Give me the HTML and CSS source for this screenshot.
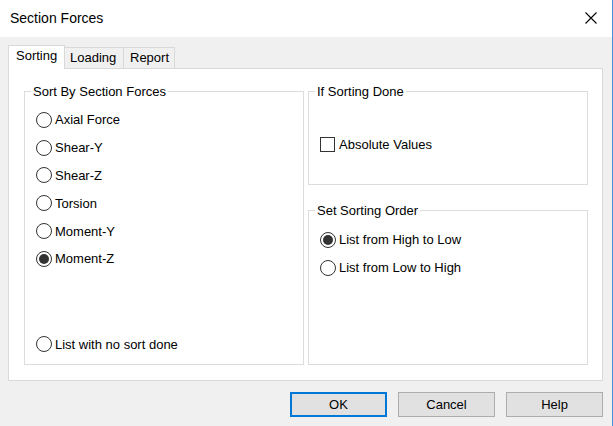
FILE: index.html
```html
<!DOCTYPE html>
<html lang="en">
<head>
    <meta charset="UTF-8">
    <title>Section Forces</title>
    <link rel="stylesheet" href="styles.css">
</head>
<body>
<div class="window">

  <!-- barra de título -->
  <div class="titlebar">
    <span class="title">Section Forces</span>
    <span class="close">
      <svg width="12" height="12" viewBox="0 0 12 12"><path d="M0.5 0.5 L11.5 11.5 M11.5 0.5 L0.5 11.5" stroke="#000" stroke-width="1.1" fill="none"/></svg>
    </span>
  </div>

  <!-- abas -->
  <div class="tabs">
    <div class="tab tab-sorting active">Sorting</div>
    <div class="tab tab-loading">Loading</div>
    <div class="tab tab-report">Report</div>
  </div>

  <div class="panel">
    <fieldset class="group group-left">
      <legend>Sort By Section Forces</legend>
      <div class="opt"><span class="radio"></span>Axial Force</div>
      <div class="opt"><span class="radio"></span>Shear-Y</div>
      <div class="opt"><span class="radio"></span>Shear-Z</div>
      <div class="opt"><span class="radio"></span>Torsion</div>
      <div class="opt"><span class="radio"></span>Moment-Y</div>
      <div class="opt"><span class="radio checked"></span>Moment-Z</div>
      <div class="opt opt-last"><span class="radio"></span>List with no sort done</div>
    </fieldset>

    <div class="right-col">
      <fieldset class="group group-done">
        <legend>If Sorting Done</legend>
        <div class="opt"><span class="check"></span>Absolute Values</div>
      </fieldset>

      <fieldset class="group group-order">
        <legend>Set Sorting Order</legend>
        <div class="opt"><span class="radio checked"></span>List from High to Low</div>
        <div class="opt"><span class="radio"></span>List from Low to High</div>
      </fieldset>
    </div>
  </div>

  <div class="buttons">
    <button class="btn btn-default">OK</button>
    <button class="btn">Cancel</button>
    <button class="btn">Help</button>
  </div>

</div>
</body>
</html>
```

FILE: styles.css
```css
html, body { margin: 0; padding: 0; }
body {
    font-family: "Liberation Sans", Arial, sans-serif;
    font-size: 13px;
    color: #000;
    background: #f0f0f0;
}

.window {
    width: 612px;
    height: 426px;
    border-right: 1px solid #4a90d9;
    background: #f0f0f0;
}

/* barra de título */
.titlebar {
    height: 37px;
    background: #fff;
    display: flex;
    align-items: center;
    justify-content: space-between;
    padding: 0 15px 0 10px;
}
.title { font-size: 14px; margin-top: -1px; }
.close { display: flex; margin-top: -1px; }

/* abas */
.tabs {
    display: flex;
    align-items: flex-end;
    padding: 8px 0 0 8px;
    height: 23px;
}
.tab {
    box-sizing: border-box;
    height: 21px;
    line-height: 20px;
    border: 1px solid #d9d9d9;
    border-bottom: none;
    border-left: none;
    background: #f0f0f0;
}
.tab.active {
    height: 24px;
    line-height: 20px;
    border-left: 1px solid #d9d9d9;
    background: #fff;
    margin-bottom: -1px;
    position: relative;
    z-index: 1;
}
.tab-sorting { width: 57px; padding-left: 7px; }
.tab-loading { width: 59px; padding-left: 5px; }
.tab-report { width: 51px; padding-left: 6px; }

/* painel */
.panel {
    box-sizing: border-box;
    width: 595px;
    height: 313px;
    margin-left: 8px;
    background: #fff;
    border: 1px solid #d9d9d9;
    display: flex;
    gap: 4px;
    padding: 15px 14px 15px 15px;
}

.group {
    box-sizing: border-box;
    width: 280px;
    margin: 0;
    padding: 0 0 0 11px;
    border: 1px solid #dcdcdc;
    min-width: 0;
}
.group legend {
    margin-left: -5px;
    padding: 0 2px;
    line-height: 15px;
    font-size: 13px;
}

.group-left {
    height: 281px;
    display: flex;
    flex-direction: column;
    padding-top: 7px;
    padding-bottom: 6px;
}

.right-col {
    display: flex;
    flex-direction: column;
    gap: 18px;
}
.group-done { height: 101px; padding-top: 32px; }
.group-order { height: 162px; padding-top: 8px; }

.opt {
    height: 27.8px;
    display: flex;
    align-items: center;
}
.opt-last { margin-top: auto; height: 28px; }

.radio {
    box-sizing: border-box;
    width: 16px;
    height: 16px;
    border: 1px solid #333;
    border-radius: 50%;
    margin-right: 3px;
    display: flex;
    align-items: center;
    justify-content: center;
    background: #fff;
}
.radio.checked::after {
    content: "";
    width: 10px;
    height: 10px;
    border-radius: 50%;
    background: #333;
}

.check {
    box-sizing: border-box;
    width: 15px;
    height: 15px;
    border: 1px solid #333;
    margin-right: 4px;
    background: #fff;
}

/* botões */
.buttons {
    display: flex;
    justify-content: flex-end;
    gap: 11px;
    padding: 11px 9px 0 0;
}
.btn {
    box-sizing: border-box;
    width: 97px;
    height: 25px;
    background: #e1e1e1;
    border: 1px solid #adadad;
    font-family: "Liberation Sans", Arial, sans-serif;
    font-size: 13px;
    color: #000;
    padding: 0;
}
.btn-default { border: 2px solid #0078d7; }
```
